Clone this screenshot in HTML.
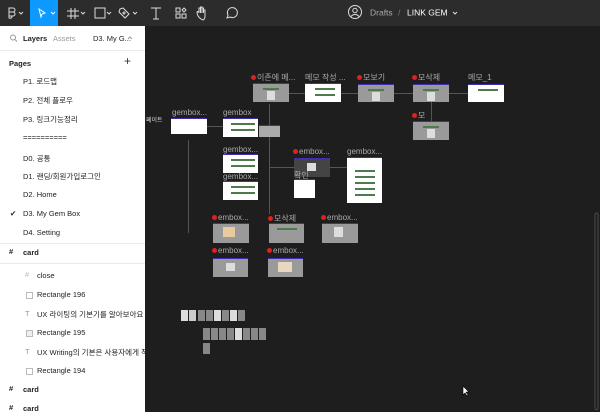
<!DOCTYPE html>
<html><head><meta charset="utf-8"><style>
*{margin:0;padding:0;box-sizing:border-box}
body{width:600px;height:412px;overflow:hidden;background:#1e1e1e;font-family:"Liberation Sans","Noto Sans CJK KR",sans-serif;position:relative}
.tb{position:absolute;left:0;top:0;width:600px;height:26px;background:#2c2c2c}
.sb{position:absolute;left:0;top:26px;width:145px;height:386px;background:#fff;color:#222;font-size:7.5px;overflow:hidden}
.sb .it{position:absolute;left:23px;white-space:nowrap}
.sb .l{position:absolute;white-space:nowrap}
.hr{position:absolute;left:0;width:145px;height:1px;background:#eaeaea}
.c{position:absolute;color:#aaa;font-size:8px;white-space:nowrap}
.f{position:absolute;border-top:1px solid #3d2fb0}
.w{background:#fff}.g{background:#9a9a9a}.d{background:#444}
.gr{position:absolute;height:2px;background:#4f7a4f}
.dot{display:inline-block;width:5px;height:5px;background:#e0201e;border-radius:50%;margin-right:1px;vertical-align:0}
.ln{position:absolute;background:#555}
.sm{position:absolute;background:#ddd}
.bx{position:absolute;left:26px;width:7px;height:7px;border:1px solid #bbb}
</style></head><body>
<div class="tb">
 <svg width="600" height="26" style="position:absolute;left:0;top:0">
  <rect x="30" y="0" width="28" height="26" fill="#0d99ff"/>
  <g fill="none" stroke="#ddd" stroke-width="1">
   <path d="M9 8h4a2 2 0 0 1 0 4h-4zM9 12h4a2 2 0 0 1 0 4h-4zM9 16h3a2 2 0 0 1-3 2z"/>
   <path d="M19 12l2 2 2-2" />
  </g>
  <path d="M39 9l6 4-3 1-1 3z" fill="none" stroke="#fff"/>
  <path d="M51 12l2 2 2-2" fill="none" stroke="#fff"/>
  <g fill="none" stroke="#ddd">
   <path d="M71 8v11M75 8v11M67 11h12M67 16h12"/><path d="M81 12l2 2 2-2"/>
   <rect x="95" y="8" width="10" height="10"/><path d="M107 12l2 2 2-2"/>
   <path d="M123 8l6 6-4 4-6-6 1-3z"/><circle cx="124" cy="13" r="1"/><path d="M133 12l2 2 2-2"/>
   <path d="M151 8h10M156 8v11M153 19h6"/>
   <rect x="176" y="8" width="4" height="4"/><rect x="182" y="14" width="4" height="4"/><rect x="176" y="14" width="4" height="4"/><path d="M184 8l2 2-2 2-2-2z"/>
   <path d="M201 19c-3-2-4-5-4-7 1-1 2 0 2 1v-5h1.5v5-6h1.5v6-5h1.5v5-3h1.5v6c0 2-1 4-2 4z"/>
   <path d="M227 18l1-3a5 5 0 1 1 2 2z"/>
   <circle cx="355" cy="12" r="6.5"/><circle cx="355" cy="10.5" r="2.2"/><path d="M351 16.5a5 5 0 0 1 8 0"/>
   <path d="M453 12l2 2 2-2"/>
  </g>
  <text x="370" y="15.5" font-size="8.5" fill="#aaa" font-family="Liberation Sans">Drafts</text>
  <text x="398" y="15.5" font-size="8.5" fill="#777" font-family="Liberation Sans">/</text>
  <text x="407" y="15.5" font-size="8.5" fill="#fff" font-family="Liberation Sans">LINK GEM</text>
 </svg>
</div>
<div class="sb">
 <svg width="145" height="30" style="position:absolute;left:0;top:0"><circle cx="13" cy="11.5" r="2.5" fill="none" stroke="#999"/><path d="M15 13.5l2 2" stroke="#999"/><path d="M128 13l2-2 2 2" fill="none" stroke="#999"/></svg>
 <div class="l" style="left:23px;top:8px;font-weight:bold">Layers</div>
 <div class="l" style="left:53px;top:8px;color:#999">Assets</div>
 <div class="l" style="left:93px;top:8px">D3. My G...</div>
 <div class="hr" style="top:24px"></div>
 <div class="l" style="left:9px;top:33px;font-weight:bold">Pages</div>
 <div class="l" style="left:124px;top:28px;font-size:12px;color:#333">+</div>
 <div class="it" style="top:50px">P1. 로드맵</div>
 <div class="it" style="top:69px">P2. 전체 플로우</div>
 <div class="it" style="top:88px">P3. 링크기능정리</div>
 <div class="it" style="top:107px">==========</div>
 <div class="it" style="top:127px">D0. 공통</div>
 <div class="it" style="top:145px">D1. 랜딩/회원가입로그인</div>
 <div class="it" style="top:164px">D2. Home</div>
 <div class="l" style="left:10px;top:183px">✔</div>
 <div class="it" style="top:183px">D3. My Gem Box</div>
 <div class="it" style="top:202px">D4. Setting</div>
 <div class="hr" style="top:217px"></div>
 <div class="l" style="left:9px;top:221px;font-weight:bold">#</div>
 <div class="l" style="left:23px;top:222px;font-weight:bold">card</div>
 <div class="hr" style="top:237px"></div>
 <div class="l" style="left:25px;top:244px;color:#bbb">#</div><div class="l" style="left:37px;top:245px">close</div>
 <div class="bx" style="top:266px"></div><div class="l" style="left:37px;top:264px">Rectangle 196</div>
 <div class="l" style="left:25px;top:283px;color:#999">T</div><div class="l" style="left:37px;top:283px">UX 라이팅의 기본기를 알아보아요</div>
 <div class="bx" style="top:304px;background:#eee"></div><div class="l" style="left:37px;top:302px">Rectangle 195</div>
 <div class="l" style="left:25px;top:321px;color:#999">T</div><div class="l" style="left:37px;top:321px">UX Writing의 기본은 사용자에게 직...</div>
 <div class="bx" style="top:342px"></div><div class="l" style="left:37px;top:340px">Rectangle 194</div>
 <div class="l" style="left:9px;top:358px;font-weight:bold">#</div><div class="l" style="left:23px;top:359px;font-weight:bold">card</div>
 <div class="l" style="left:9px;top:377px;font-weight:bold">#</div><div class="l" style="left:23px;top:378px;font-weight:bold">card</div>
</div>
<!-- canvas -->
<div class="ln" style="left:188px;top:140px;width:1px;height:93px"></div>
<div class="ln" style="left:269px;top:104px;width:1px;height:110px"></div>
<div class="ln" style="left:269px;top:167px;width:26px;height:1px"></div>
<div class="ln" style="left:289px;top:93px;width:16px;height:1px"></div>
<div class="ln" style="left:341px;top:93px;width:17px;height:1px"></div>
<div class="ln" style="left:394px;top:93px;width:19px;height:1px"></div>
<div class="ln" style="left:449px;top:93px;width:19px;height:1px"></div>
<div class="ln" style="left:431px;top:102px;width:1px;height:19px"></div>
<div class="ln" style="left:207px;top:126px;width:16px;height:1px"></div>
<div class="ln" style="left:330px;top:167px;width:17px;height:1px"></div>
<div class="c" style="left:146px;top:115px;color:#ddd;font-size:6px">페이트</div>

<div class="c" style="left:251px;top:72px"><span class="dot"></span>이존에 메...</div>
<div class="f g" style="left:253px;top:83px;width:36px;height:19px"><div class="gr" style="left:10px;top:4px;width:16px"></div><div class="sm" style="left:14px;top:7px;width:8px;height:9px"></div></div>
<div class="c" style="left:305px;top:72px">메모 작성 ...</div>
<div class="f w" style="left:305px;top:83px;width:36px;height:19px"><div class="gr" style="left:10px;top:4px;width:20px"></div><div class="gr" style="left:10px;top:10px;width:20px"></div></div>
<div class="c" style="left:357px;top:72px"><span class="dot"></span>모보기</div>
<div class="f g" style="left:358px;top:84px;width:36px;height:18px"><div class="gr" style="left:10px;top:4px;width:16px"></div><div class="sm" style="left:14px;top:7px;width:8px;height:9px"></div></div>
<div class="c" style="left:412px;top:72px"><span class="dot"></span>모삭제</div>
<div class="f g" style="left:413px;top:84px;width:36px;height:18px"><div class="gr" style="left:10px;top:4px;width:16px"></div><div class="sm" style="left:14px;top:7px;width:8px;height:9px"></div></div>
<div class="c" style="left:468px;top:72px">메모_1</div>
<div class="f w" style="left:468px;top:84px;width:36px;height:18px"><div class="gr" style="left:10px;top:4px;width:20px"></div></div>
<div class="c" style="left:412px;top:110px"><span class="dot"></span>모</div>
<div class="f g" style="left:413px;top:121px;width:36px;height:19px"><div class="gr" style="left:10px;top:4px;width:16px"></div><div class="sm" style="left:14px;top:7px;width:8px;height:9px"></div></div>

<div class="c" style="left:172px;top:108px">gembox...</div>
<div class="f w" style="left:171px;top:118px;width:36px;height:16px"></div>
<div class="c" style="left:223px;top:108px">gembox</div>
<div class="f w" style="left:223px;top:118px;width:35px;height:19px"><div class="gr" style="left:8px;top:4px;width:24px"></div><div class="gr" style="left:8px;top:10px;width:24px"></div></div>
<div class="f" style="left:259px;top:125px;width:21px;height:12px;background:#aaa"></div>
<div class="c" style="left:223px;top:145px">gembox...</div>
<div class="f w" style="left:223px;top:154px;width:35px;height:19px"><div class="gr" style="left:8px;top:4px;width:24px"></div><div class="gr" style="left:8px;top:10px;width:24px"></div></div>
<div class="c" style="left:223px;top:172px">gembox...</div>
<div class="f w" style="left:223px;top:181px;width:35px;height:19px"><div class="gr" style="left:8px;top:4px;width:24px"></div><div class="gr" style="left:8px;top:10px;width:24px"></div></div>
<div class="c" style="left:293px;top:147px"><span class="dot"></span>embox...</div>
<div class="f d" style="left:294px;top:158px;width:36px;height:19px"><div class="sm" style="left:13px;top:4px;width:9px;height:8px"></div></div>
<div class="c" style="left:294px;top:170px">확인</div>
<div class="f w" style="left:294px;top:179px;width:21px;height:19px"></div>
<div class="c" style="left:347px;top:147px">gembox...</div>
<div class="f w" style="left:347px;top:157px;width:35px;height:46px"><div class="gr" style="left:8px;top:12px;width:20px"></div><div class="gr" style="left:8px;top:18px;width:20px"></div><div class="gr" style="left:8px;top:24px;width:20px"></div><div class="gr" style="left:8px;top:30px;width:20px"></div><div class="gr" style="left:8px;top:36px;width:20px"></div></div>

<div class="c" style="left:212px;top:213px"><span class="dot"></span>embox...</div>
<div class="f g" style="left:213px;top:223px;width:36px;height:20px"><div class="sm" style="left:10px;top:3px;width:12px;height:10px;background:#e8c9a0"></div></div>
<div class="c" style="left:268px;top:213px"><span class="dot"></span>모삭제</div>
<div class="f g" style="left:269px;top:223px;width:35px;height:20px"><div class="gr" style="left:8px;top:4px;width:20px"></div></div>
<div class="c" style="left:321px;top:213px"><span class="dot"></span>embox...</div>
<div class="f g" style="left:322px;top:223px;width:36px;height:20px"><div class="sm" style="left:12px;top:3px;width:9px;height:10px"></div></div>
<div class="c" style="left:212px;top:246px"><span class="dot"></span>embox...</div>
<div class="f g" style="left:213px;top:258px;width:35px;height:19px"><div class="sm" style="left:13px;top:4px;width:9px;height:8px"></div></div>
<div class="c" style="left:267px;top:246px"><span class="dot"></span>embox...</div>
<div class="f g" style="left:268px;top:258px;width:35px;height:19px"><div class="sm" style="left:10px;top:3px;width:14px;height:10px;background:#ead7c0"></div></div>

<svg width="600" height="412" style="position:absolute;left:0;top:0;pointer-events:none">
 <g fill="#888">
  <rect x="181" y="310" width="7" height="11" fill="#ddd"/><rect x="189" y="310" width="7" height="11" fill="#ccc"/>
  <rect x="198" y="310" width="7" height="11"/><rect x="206" y="310" width="7" height="11"/>
  <rect x="214" y="310" width="7" height="11" fill="#ddd"/><rect x="222" y="310" width="7" height="11"/>
  <rect x="230" y="310" width="7" height="11" fill="#ddd"/><rect x="238" y="310" width="7" height="11"/>
  <rect x="203" y="328" width="7" height="12"/><rect x="211" y="328" width="7" height="12"/><rect x="219" y="328" width="7" height="12"/><rect x="227" y="328" width="7" height="12"/><rect x="235" y="328" width="7" height="12" fill="#ddd"/><rect x="243" y="328" width="7" height="12"/><rect x="251" y="328" width="7" height="12"/><rect x="259" y="328" width="7" height="12"/>
  <rect x="203" y="343" width="7" height="11"/>
 </g>
 <rect x="595" y="213" width="3" height="197" rx="1.5" fill="none" stroke="#555" stroke-width="0.8"/>
 <path d="M463 386v9l2-2 2 3 1-1-2-3h3z" fill="#fff" stroke="#000" stroke-width="0.6"/>
</svg>
</body></html>
